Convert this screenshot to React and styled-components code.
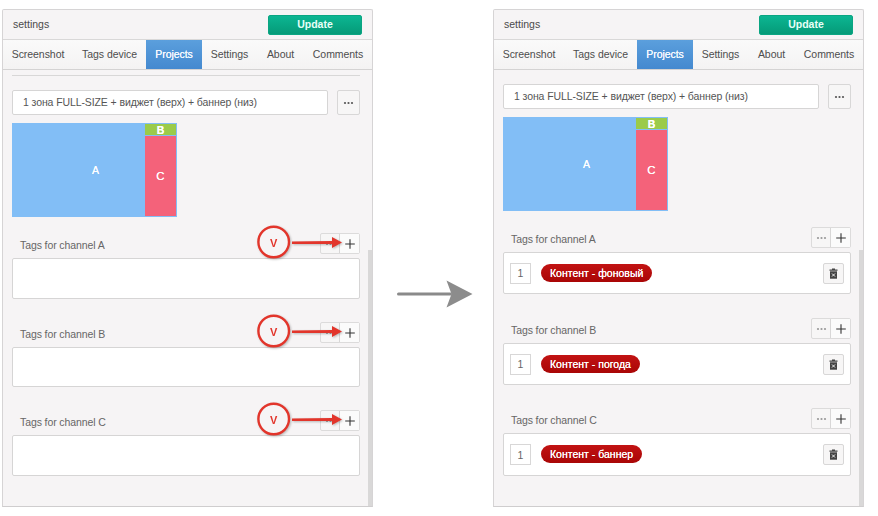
import React from 'react';
import styled, { createGlobalStyle } from 'styled-components';

const Global = createGlobalStyle`
  html, body { margin: 0; padding: 0; background: #fff; }
  body { font-family: "Liberation Sans", Arial, sans-serif; color: #555; }
  * { box-sizing: border-box; }
`;

const Page = styled.div`
  width: 878px;
  height: 516px;
  padding: 9px 0 0 2px;
  display: flex;
  align-items: flex-start;
  overflow: hidden;
`;

const Panel = styled.section`
  position: relative;
  flex: none;
  width: 371px;
  height: 498px;
  background: #f6f4f5;
  border: 1px solid #d6d4d5;
  border-bottom-color: #cfcdce;
  border-radius: 2px 2px 0 0;
`;

const Scroll = styled.div`
  position: absolute;
  right: 0;
  top: 240px;
  bottom: 0;
  width: 4px;
  background: #d9d8d8;
`;

const Header = styled.header`
  height: 29px;
  display: flex;
  align-items: center;
  justify-content: space-between;
  padding: 0 10px 0 10px;
  font-size: 10.5px;
  color: #4a4a4a;
`;

const HeaderTitle = styled.span`
  margin-top: -1px;
`;

const UpdateButton = styled.button`
  width: 94px;
  height: 20px;
  border: 1px solid #0aa582;
  border-radius: 2px;
  background: linear-gradient(#0cb592, #059a78);
  color: #e8fff8;
  font: bold 10.5px "Liberation Sans", Arial, sans-serif;
  padding: 0 0 1px;
`;

const Tabs = styled.nav`
  height: 31px;
  display: flex;
  border-top: 1px solid #d9d8d8;
  border-bottom: 1px solid #d4d3d3;
  background: linear-gradient(#fafafa, #f4f3f3);
`;

const Tab = styled.div`
  flex: none;
  width: ${p => p.$w}px;
  display: flex;
  align-items: center;
  justify-content: center;
  padding-bottom: 1px;
  font-size: 10.5px;
  letter-spacing: -0.05px;
  color: ${p => (p.$active ? '#f4f9ff' : '#4d4d4d')};
  text-shadow: ${p => (p.$active ? '0 0 0.6px #fff' : 'none')};
  background: ${p => (p.$active ? 'linear-gradient(#5b9fdd, #4489cf)' : 'transparent')};
`;

const Body = styled.div`
  padding: ${p => (p.$scrolled ? 14 : 5)}px 12px 0 9px;
`;

const Rule = styled.hr`
  height: 1px;
  margin: 0 0 14px;
  border: 0;
  background: #d8d7d7;
`;

const SelectRow = styled.div`
  display: flex;
  justify-content: space-between;
  height: 25px;
`;

const Select = styled.div`
  width: 316px;
  height: 25px;
  display: flex;
  align-items: center;
  padding: 0 0 1px 10px;
  background: #fff;
  border: 1px solid #d6d5d5;
  border-radius: 2px;
  font-size: 10.5px;
  letter-spacing: -0.1px;
  color: #555;
`;

const Square = styled.button`
  width: 23px;
  height: 25px;
  padding: 0;
  display: flex;
  align-items: center;
  justify-content: center;
  background: #f7f6f6;
  border: 1px solid #d8d7d7;
  border-radius: 2px;
`;

const Layout = styled.div`
  margin-top: 8px;
  width: 165px;
  height: 94px;
  display: flex;
  background: #82bef6;
  border: 1px solid #82bef6;
  color: #fff;
  font: 10.5px "Liberation Sans", Arial, sans-serif;
  text-shadow: 0 0 0.6px #fff;
`;

const ZoneA = styled.div`
  width: 132px;
  display: flex;
  align-items: center;
  justify-content: center;
  padding-left: 33px;
  padding-bottom: 1px;
`;

const ZoneSide = styled.div`
  flex: 1;
  display: flex;
  flex-direction: column;
`;

const Zone = styled.div`
  height: ${p => p.$h}px;
  flex: ${p => (p.$h ? 'none' : 1)};
  display: flex;
  align-items: center;
  justify-content: center;
  background: ${p => p.$bg};
  font-size: ${p => (p.$h ? 10.5 : 11.5)}px;
  font-weight: ${p => (p.$h ? 'bold' : 'normal')};
  margin-bottom: ${p => (p.$h ? 1 : 0)}px;
`;

const Channel = styled.div`
  position: relative;
  margin-top: ${p => p.$top}px;
`;

const ChannelHead = styled.div`
  display: flex;
  align-items: flex-start;
  justify-content: space-between;
  height: 20px;
  margin-bottom: 5px;
`;

const ChannelLabel = styled.span`
  padding: 6px 0 0 8px;
  font-size: 10.5px;
  letter-spacing: -0.1px;
  color: #666;
`;

const BtnGroup = styled.div`
  display: flex;
  width: 40px;
  height: 21px;
  border: 1px solid #dcdbdb;
  border-radius: 2px;
  background: #f7f6f6;
`;

const GroupBtn = styled.div`
  flex: 1;
  display: flex;
  align-items: center;
  justify-content: center;
  & + & { flex: none; width: 20px; border-left: 1px solid #d8d7d7; background: #fbfbfb; }
`;

const TagBox = styled.div`
  height: ${p => p.$h}px;
  display: flex;
  align-items: center;
  padding: 0 6px;
  background: #fff;
  border: 1px solid #d6d5d5;
  border-radius: 2px;
`;

const Num = styled.div`
  flex: none;
  width: 21px;
  height: 21px;
  display: flex;
  align-items: center;
  justify-content: center;
  border: 1px solid #d8d7d7;
  font-size: 10.5px;
  color: #666;
`;

const Pill = styled.div`
  margin-left: 10px;
  height: 18px;
  margin-top: -1px;
  padding: 0 9px;
  display: flex;
  align-items: center;
  border-radius: 9px;
  background: linear-gradient(#c21313, #a90606);
  color: #fff;
  font-size: 10.5px;
  text-shadow: 0 0 0.5px #fff;
`;

const Trash = styled.div`
  flex: none;
  margin-left: auto;
  width: 21px;
  height: 21px;
  display: flex;
  align-items: center;
  justify-content: center;
  background: #f7f6f6;
  border: 1px solid #d8d7d7;
  border-radius: 2px;
`;

const Marker = styled.svg`
  position: absolute;
  right: 0;
  top: -7px;
  width: 103px;
  height: 34px;
  overflow: visible;
  filter: drop-shadow(1px 1px 1px rgba(0, 0, 0, 0.25));
`;

const MarkerText = styled.text`
  font: bold 11px "Liberation Sans", Arial, sans-serif;
  fill: #e2352b;
`;

const ArrowSlot = styled.div`
  flex: none;
  width: 120px;
  height: 100%;
  display: flex;
  align-items: center;
  justify-content: center;
  padding: 63px 0 0 1px;
`;

const Dots = ({ c = '#555' }) => (
  <svg width="11" height="4" viewBox="0 0 11 4">
    <circle cx="2" cy="2" r="1.100" fill={c} />
    <circle cx="5.500" cy="2" r="1.100" fill={c} />
    <circle cx="9" cy="2" r="1.100" fill={c} />
  </svg>
);

const Plus = () => (
  <svg width="10" height="10" viewBox="0 0 10 10">
    <path d="M5 .2v9.600M.2 5h9.600" stroke="#333" strokeWidth="1.100" fill="none" />
  </svg>
);

const TrashIcon = () => (
  <svg width="9" height="11" viewBox="0 0 9 11">
    <path d="M3 .5h3v1h2.500v1.200h-8V1.500H3z" fill="#444" />
    <rect x="1" y="3.300" width="7" height="7.400" fill="#444" />
    <path d="M3 5.500l3 3M6 5.500l-3 3" stroke="#f4f3f3" strokeWidth="1" />
  </svg>
);

const MarkerMark = () => (
  <Marker viewBox="0 0 103 34">
    <circle cx="16.700" cy="16" r="15.300" fill="#f6f4f5" stroke="#e2352b" strokeWidth="2.400" />
    <MarkerText x="16.700" y="20.500" textAnchor="middle">V</MarkerText>
    <path d="M35 15.500L75 15v-4l10 5.500-10 5.500v-4L35 18z" fill="#e2352b" />
  </Marker>
);

const names = [['Screenshot', 70], ['Tags device', 73], ['Projects', 56], ['Settings', 55], ['About', 47], ['Comments', 68]];

const PanelView = ({ filled, channels }) => (
  <Panel>
    <Header>
      <HeaderTitle>settings</HeaderTitle>
      <UpdateButton>Update</UpdateButton>
    </Header>
    <Tabs>
      {names.map(([n, w]) => (
        <Tab key={n} $w={w} $active={n === 'Projects'}>{n}</Tab>
      ))}
    </Tabs>
    <Body $scrolled={filled}>
      {!filled && <Rule />}
      <SelectRow>
        <Select>1 зона FULL-SIZE + виджет (верх) + баннер (низ)</Select>
        <Square><Dots /></Square>
      </SelectRow>
      <Layout>
        <ZoneA>A</ZoneA>
        <ZoneSide>
          <Zone $h={11} $bg="#9bcb4a">B</Zone>
          <Zone $bg="#f4627a">C</Zone>
        </ZoneSide>
      </Layout>
      {channels.map(ch => (
        <Channel key={ch.name} $top={ch.top}>
          <ChannelHead>
            <ChannelLabel>Tags for channel {ch.name}</ChannelLabel>
            <BtnGroup>
              <GroupBtn><Dots c="#999" /></GroupBtn>
              <GroupBtn><Plus /></GroupBtn>
            </BtnGroup>
          </ChannelHead>
          <TagBox $h={ch.h}>
            {filled && (
              <>
                <Num>1</Num>
                <Pill>{ch.tag}</Pill>
                <Trash><TrashIcon /></Trash>
              </>
            )}
          </TagBox>
          {!filled && <MarkerMark />}
        </Channel>
      ))}
    </Body>
    <Scroll />
  </Panel>
);

const leftChannels = [
  { name: 'A', top: 16, h: 41 },
  { name: 'B', top: 23, h: 40 },
  { name: 'C', top: 23, h: 41 },
];
const rightChannels = [
  { name: 'A', top: 16, h: 42, tag: 'Контент - фоновый' },
  { name: 'B', top: 24, h: 42, tag: 'Контент - погода' },
  { name: 'C', top: 23, h: 43, tag: 'Контент - баннер' },
];

export default function App() {
  return (
    <>
      <Global />
      <Page>
        <PanelView channels={leftChannels} />
        <ArrowSlot>
          <svg width="80" height="30" viewBox="0 0 80 30">
            <path d="M4.500 15h52" stroke="#8a8a8a" strokeWidth="3" strokeLinecap="round" />
            <path d="M52.500 1.500l26 13.500-26 13.500 5-13.500z" fill="#8c8c8c" />
          </svg>
        </ArrowSlot>
        <PanelView filled channels={rightChannels} />
      </Page>
    </>
  );
}
